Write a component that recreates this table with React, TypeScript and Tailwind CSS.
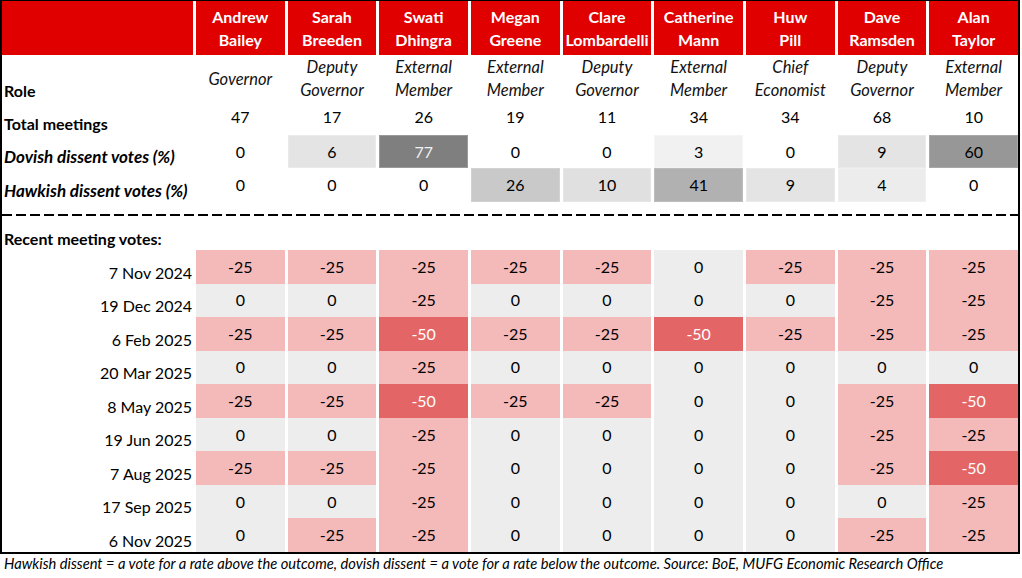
import React from "react";

type Member = {
  first: string;
  last: string;
  role: [string, string?];
  total: number;
  dovish: number;
  hawkish: number;
};

const MEMBERS: Member[] = [
  { first: "Andrew", last: "Bailey", role: ["Governor"], total: 47, dovish: 0, hawkish: 0 },
  { first: "Sarah", last: "Breeden", role: ["Deputy", "Governor"], total: 17, dovish: 6, hawkish: 0 },
  { first: "Swati", last: "Dhingra", role: ["External", "Member"], total: 26, dovish: 77, hawkish: 0 },
  { first: "Megan", last: "Greene", role: ["External", "Member"], total: 19, dovish: 0, hawkish: 26 },
  { first: "Clare", last: "Lombardelli", role: ["Deputy", "Governor"], total: 11, dovish: 0, hawkish: 10 },
  { first: "Catherine", last: "Mann", role: ["External", "Member"], total: 34, dovish: 3, hawkish: 41 },
  { first: "Huw", last: "Pill", role: ["Chief", "Economist"], total: 34, dovish: 0, hawkish: 9 },
  { first: "Dave", last: "Ramsden", role: ["Deputy", "Governor"], total: 68, dovish: 9, hawkish: 4 },
  { first: "Alan", last: "Taylor", role: ["External", "Member"], total: 10, dovish: 60, hawkish: 0 },
];

const VOTES: [string, number[]][] = [
  ["7 Nov 2024", [-25, -25, -25, -25, -25, 0, -25, -25, -25]],
  ["19 Dec 2024", [0, 0, -25, 0, 0, 0, 0, -25, -25]],
  ["6 Feb 2025", [-25, -25, -50, -25, -25, -50, -25, -25, -25]],
  ["20 Mar 2025", [0, 0, -25, 0, 0, 0, 0, 0, 0]],
  ["8 May 2025", [-25, -25, -50, -25, -25, 0, 0, -25, -50]],
  ["19 Jun 2025", [0, 0, -25, 0, 0, 0, 0, -25, -25]],
  ["7 Aug 2025", [-25, -25, -25, 0, 0, 0, 0, -25, -50]],
  ["17 Sep 2025", [0, 0, -25, 0, 0, 0, 0, 0, -25]],
  ["6 Nov 2025", [0, -25, -25, 0, 0, 0, 0, -25, -25]],
];

// shade for dissent share, like the spreadsheet's colour scale
function statShade(v: number): string {
  if (v === 0) return "";
  if (v >= 70) return "bg-[#7f7f7f] text-[#f2f2f2] border border-[#9a9a9a]";
  if (v >= 55) return "bg-[#979797] border border-[#a8a8a8]";
  if (v >= 40) return "bg-[#b1b1b1] border border-[#bdbdbd]";
  if (v >= 20) return "bg-[#c9c9c9] border border-[#d2d2d2]";
  if (v >= 10) return "bg-[#e0e0e0] border border-[#e6e6e6]";
  if (v >= 6) return "bg-[#e4e4e4] border border-[#eaeaea]";
  if (v >= 4) return "bg-[#ececec] border border-[#f0f0f0]";
  return "bg-[#f1f1f1] border border-[#f5f5f5]";
}

function voteShade(v: number): string {
  if (v <= -50) return "bg-[#e46565] text-white";
  if (v < 0) return "bg-[#f4b9b9] text-black";
  return "bg-[#ededed] text-black";
}

const GRID = "grid grid-cols-[191px_repeat(9,minmax(0,1fr))] gap-x-[3px]";

export default function App() {
  return (
    <div
      className="w-[1022px] h-[578px] bg-white text-black"
      style={{ fontFamily: "Lato, 'Liberation Sans', sans-serif" }}
    >
      <div className="w-[1020px] border-t border-x-2 border-b-2 border-black">
        {/* Header */}
        <div className={`${GRID} h-[54px]`}>
          <div className="bg-[#e10000]" />
          {MEMBERS.map((m) => (
            <div
              key={m.last}
              className="bg-[#e10000] flex flex-col items-center justify-center pb-[1px] text-white font-bold text-[16px] leading-[23px]"
            >
              <span>{m.first}</span>
              <span>{m.last}</span>
            </div>
          ))}
        </div>

        {/* Role */}
        <div className={`${GRID} h-[46px]`}>
          <div className="flex items-end pl-[2px] font-bold text-[16px] leading-[22px]">Role</div>
          {MEMBERS.map((m) => (
            <div
              key={m.last}
              className="flex flex-col items-center justify-center pt-[1px] italic text-[16.5px] leading-[23px] text-[#111]"
            >
              {m.role.map((r) => (
                <span key={r}>{r}</span>
              ))}
            </div>
          ))}
        </div>

        {/* Total meetings */}
        <div className={`${GRID} h-[34px]`}>
          <div className="flex items-end pl-[2px] font-bold text-[16px] leading-[22px]">Total meetings</div>
          {MEMBERS.map((m) => (
            <div key={m.last} className="flex items-center justify-center pb-[3px] text-[16px]">
              {m.total}
            </div>
          ))}
        </div>

        {/* Dovish */}
        <div className={`${GRID} h-[33px]`}>
          <div className="flex items-end pl-[2px] font-bold italic text-[17px] leading-[22px] whitespace-nowrap">
            Dovish dissent votes (%)
          </div>
          {MEMBERS.map((m) => (
            <div
              key={m.last}
              className={`flex items-center justify-center text-[16px] ${statShade(m.dovish)}`}
            >
              {m.dovish}
            </div>
          ))}
        </div>

        {/* Hawkish */}
        <div className={`${GRID} h-[34px]`}>
          <div className="flex items-end pl-[2px] font-bold italic text-[17px] leading-[22px] whitespace-nowrap">
            Hawkish dissent votes (%)
          </div>
          {MEMBERS.map((m) => (
            <div
              key={m.last}
              className={`flex items-center justify-center text-[16px] ${statShade(m.hawkish)}`}
            >
              {m.hawkish}
            </div>
          ))}
        </div>

        {/* dashed divider */}
        <div className="pt-[12px] h-[16px]">
          <div className="h-[2px] bg-[repeating-linear-gradient(90deg,#000_0_10px,transparent_10px_14px)]" />
        </div>

        <div className="h-[32px] flex items-end pl-[2px] font-bold text-[16px] leading-[22px]">
          Recent meeting votes:
        </div>

        {/* Votes */}
        {VOTES.map(([date, row]) => (
          <div key={date} className={`${GRID} h-[33.55px]`}>
            <div className="flex items-end justify-end pr-[1px] text-[16px] leading-[22px]">{date}</div>
            {row.map((v, i) => (
              <div key={i} className={`flex items-center justify-center text-[16px] ${voteShade(v)}`}>
                {v}
              </div>
            ))}
          </div>
        ))}
      </div>

      <p className="pl-[4px] italic text-[14.7px] leading-[19px]">
        Hawkish dissent = a vote for a rate above the outcome, dovish dissent = a vote for a rate below the outcome.
        Source: BoE, MUFG Economic Research Office
      </p>
    </div>
  );
}
